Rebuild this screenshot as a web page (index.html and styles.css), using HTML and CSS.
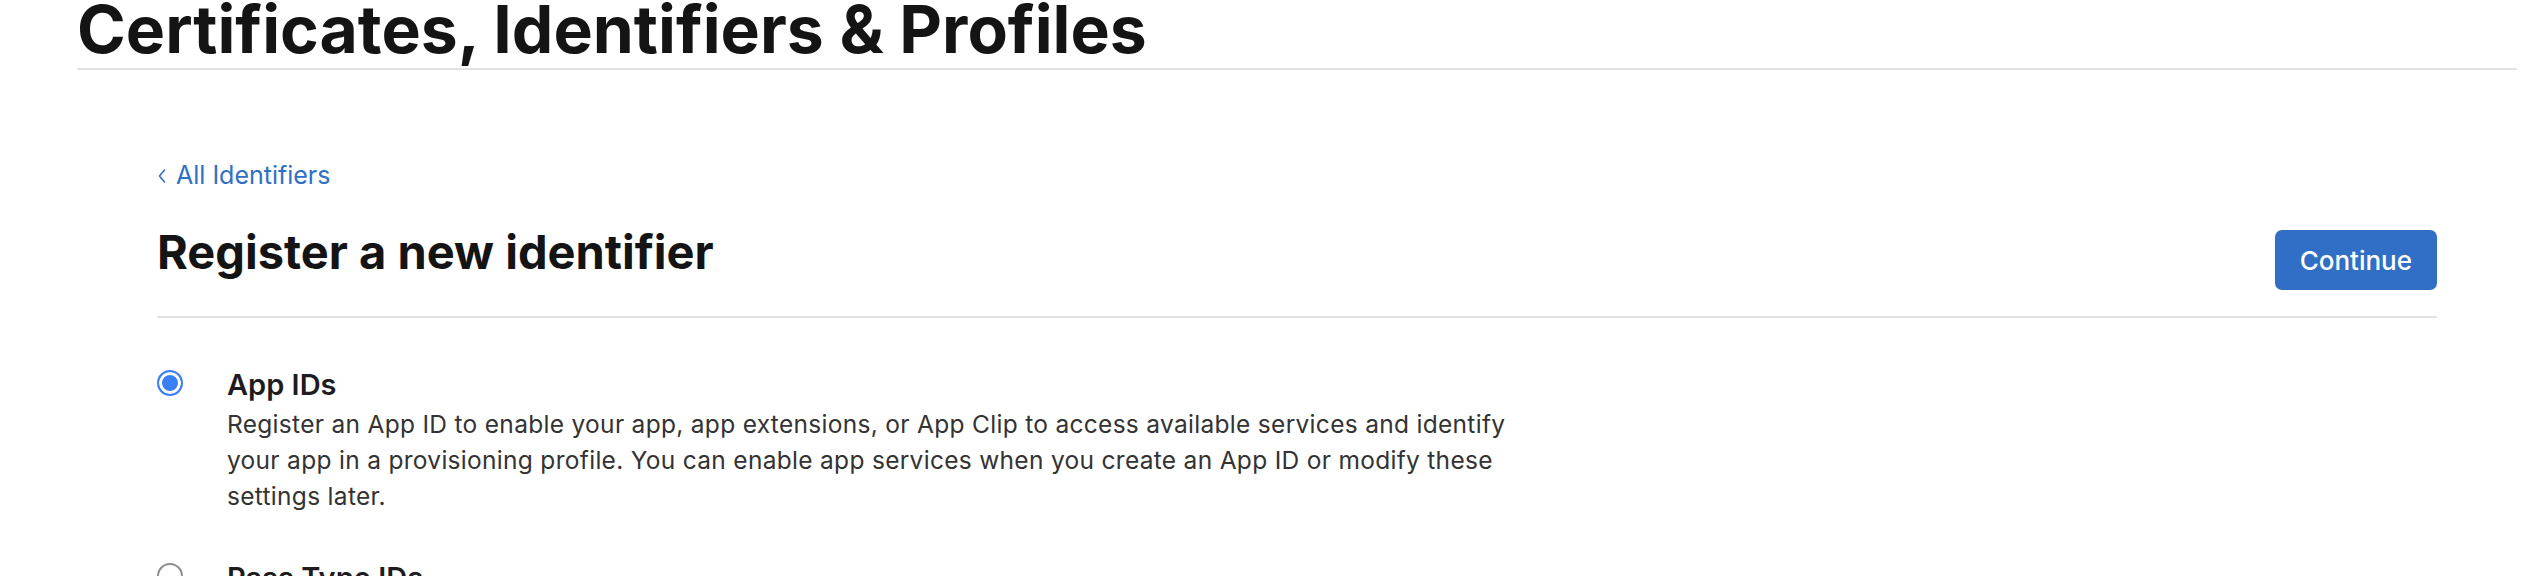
FILE: index.html
```html
<!DOCTYPE html>
<html lang="en">
<head>
<meta charset="utf-8">
<title>Certificates, Identifiers &amp; Profiles</title>
<link rel="stylesheet" href="styles.css">
</head>
<body>
<div class="page">
  <header class="page-header">
    <h1 class="page-title">Certificates, Identifiers &amp; Profiles</h1>
  </header>
  <main class="main">
    <a class="back-link" href="#"><svg class="chevron" width="8" height="14" viewBox="0 0 8 14"><polyline points="6.5,1 1.5,7 6.5,13" fill="none" stroke="currentColor" stroke-width="1.6" stroke-linecap="round" stroke-linejoin="round"/></svg>All Identifiers</a>
    <div class="title-row">
      <h2 class="section-title">Register a new identifier</h2>
      <button class="btn-primary" type="button">Continue</button>
    </div>
    <ul class="options">
      <li class="option">
        <span class="radio radio-checked"></span>
        <div class="option-body">
          <div class="option-title">App IDs</div>
          <p class="option-desc">Register an App ID to enable your app, app extensions, or App Clip to access available services and identify your app in a provisioning profile. You can enable app services when you create an App ID or modify these settings later.</p>
        </div>
      </li>
      <li class="option">
        <span class="radio"></span>
        <div class="option-body">
          <div class="option-title">Pass Type IDs</div>
          <p class="option-desc">Register a pass type identifier (Pass Type ID) for each kind of pass you create (i.e. gift cards). Registering your Pass Type IDs lets you generate Apple-issued certificates which are used to digitally sign and send updates to your passes, and allow your passes to be recognized by Wallet.</p>
        </div>
      </li>
    </ul>
  </main>
</div>
</body>
</html>
```
FILE: styles.css
```css
html, body {
  margin: 0;
  padding: 0;
  background: #ffffff;
}

body {
  font-family: Inter, "Liberation Sans", Arial, sans-serif;
  color: #1d1d1f;
  overflow: hidden;
}

.page {
  padding: 0 27px 0 77px;
}

.page-header {
  padding-bottom: 10px;
  border-bottom: 2px solid #e3e3e3;
}

.page-title {
  margin: 0;
  font-size: 66px;
  line-height: 58px;
  font-weight: 700;
  letter-spacing: 0;
  color: #141414;
}

.main {
  padding: 0 80px;
}

.back-link {
  display: inline-flex;
  align-items: center;
  margin-top: 90px;
  font-size: 25px;
  line-height: 30px;
  color: #2f6fc6;
  text-decoration: none;
}

.chevron {
  margin: 2px 10px 0 1px;
}

.title-row {
  display: flex;
  justify-content: space-between;
  align-items: flex-start;
  margin-top: 35px;
  padding-bottom: 26px;
  border-bottom: 2px solid #e3e3e3;
}

.section-title {
  margin: 0;
  font-size: 47px;
  line-height: 54px;
  font-weight: 700;
  color: #141414;
}

.btn-primary {
  margin-top: 5px;
  height: 60px;
  padding: 0 25px;
  border: none;
  border-radius: 7px;
  background: #306fc5;
  color: #ffffff;
  font-family: inherit;
  font-size: 26px;
  font-weight: 500;
}

.options {
  list-style: none;
  margin: 0;
  padding: 49px 0 0;
}

.option {
  display: flex;
  align-items: flex-start;
  gap: 44px;
  margin-bottom: 46px;
}

.radio {
  flex: none;
  box-sizing: border-box;
  width: 26px;
  height: 26px;
  margin-top: 3px;
  border-radius: 50%;
  border: 2px solid #8e8e8e;
  background: #ffffff;
}

.radio-checked {
  border-color: #3a7ff5;
  background: #3a7ff5;
  box-shadow: inset 0 0 0 3px #ffffff;
}

.option-title {
  font-size: 29px;
  line-height: 36px;
  font-weight: 600;
  color: #1d1d1f;
}

.option-desc {
  margin: 3px 0 0;
  max-width: 1310px;
  font-size: 24.5px;
  line-height: 36px;
  color: #333333;
  letter-spacing: 0.3px;
}
```
